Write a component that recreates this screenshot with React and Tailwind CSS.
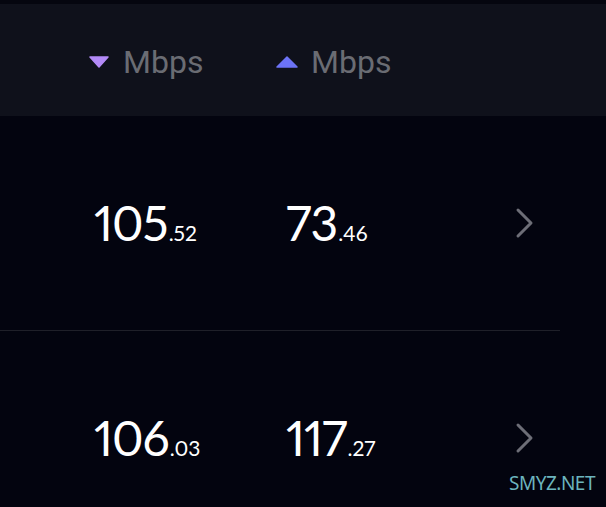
import React from "react";

const rows = [
  { d: "105", dd: ".52", u: "73", ud: ".46" },
  { d: "106", dd: ".03", u: "117", ud: ".27" },
];

function Chevron() {
  return (
    <svg width="22" height="32" viewBox="0 0 22 32" fill="none" className="shrink-0">
      <path d="M4 3 L17 16 L4 29" stroke="#6d6e77" strokeWidth="3" strokeLinecap="round" strokeLinejoin="round" />
    </svg>
  );
}

function Num({ a, b }) {
  return (
    <div className="flex items-baseline text-white font-['Lato',sans-serif] proportional-nums font-normal">
      <span className="text-[48px] leading-none tracking-[-1px]">{a}</span>
      <span className="text-[21px] leading-none ml-[1px]">{b}</span>
    </div>
  );
}

export default function App() {
  return (
    <div className="w-[606px] h-[507px] overflow-hidden bg-[#03040f] font-['Roboto',sans-serif] relative">
      <div className="h-[4px] bg-[#05060f]" />
      <div className="h-[112px] bg-[#0f111b] flex items-center pl-[89px] pt-[3px]">
        <div className="flex items-center w-[187px] shrink-0">
          <svg width="20" height="12" viewBox="0 0 20 12" className="mr-[14px] shrink-0">
            <path d="M1 1 H19 L10 11 Z" fill="#b38af7" stroke="#b38af7" strokeWidth="1.5" strokeLinejoin="round" />
          </svg>
          <span className="text-[32px] text-[#6a6c73] leading-none">Mbps</span>
        </div>
        <div className="flex items-center shrink-0">
          <svg width="22" height="12" viewBox="0 0 22 12" className="mr-[13px] shrink-0">
            <path d="M1 11 H21 L11 1 Z" fill="#6c73f6" stroke="#6c73f6" strokeWidth="1.5" strokeLinejoin="round" />
          </svg>
          <span className="text-[32px] text-[#6a6c73] leading-none">Mbps</span>
        </div>
      </div>
      {rows.map((r, i) => (
        <div key={i} className="h-[215px] mr-[46px] border-b border-[#1f2029] flex items-center pl-[94px]">
          <div className="w-[192px] shrink-0">
            <Num a={r.d} b={r.dd} />
          </div>
          <div className="w-[228px] shrink-0">
            <Num a={r.u} b={r.ud} />
          </div>
          <Chevron />
        </div>
      ))}
      <div className="absolute left-[509px] top-[474px] text-[19px] text-[#6cb4be] font-['Noto_Sans',sans-serif] leading-none tracking-[-0.5px]">
        SMYZ.NET
      </div>
    </div>
  );
}
